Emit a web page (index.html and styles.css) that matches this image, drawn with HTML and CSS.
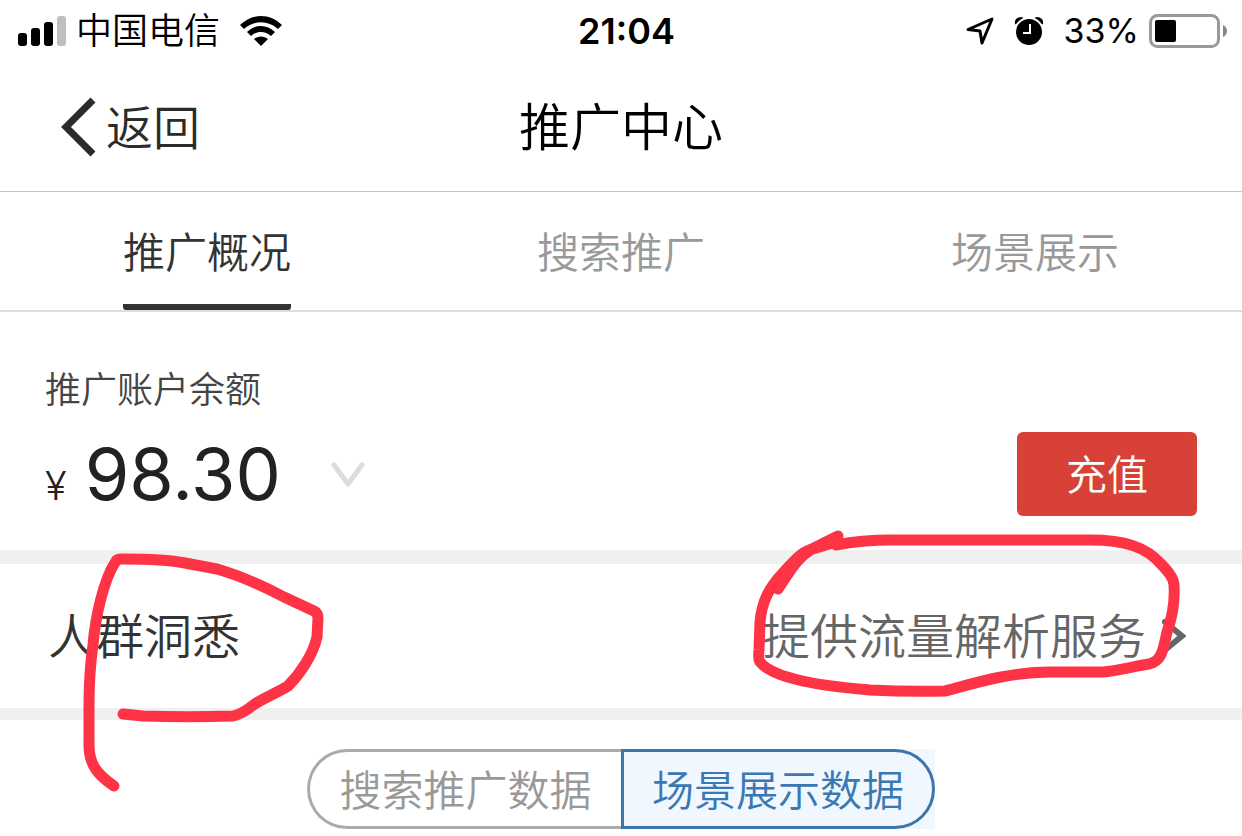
FILE: index.html
```html
<!DOCTYPE html>
<html lang="zh-CN">
<head>
    <meta charset="UTF-8">
    <meta name="viewport" content="width=device-width, initial-scale=1.0">
    <title>推广中心</title>
    <link rel="stylesheet" href="styles.css">
</head>
<body>
    <div class="status-bar">
        <div class="status-left">
            <svg class="signal" width="48" height="30" viewBox="0 0 48 30">
                <rect x="0" y="17" width="9" height="13" rx="3"/>
                <rect x="13" y="12" width="9" height="18" rx="3"/>
                <rect x="26" y="6" width="9" height="24" rx="3"/>
                <rect x="39" y="0" width="9" height="30" rx="3" fill="#bfbfbf"/>
            </svg>
            <span class="carrier">中国电信</span>
            <svg class="wifi" width="42" height="30" viewBox="0 0 42 30">
                <path d="M0 9C12-3 30-3 42 9L38 13C28 4 14 4 4 13Z"/>
                <path d="M7 16C15 8 27 8 35 16L31 20C25 14.500 17 14.500 11 20Z"/>
                <path d="M14 23C18 19.500 24 19.500 28 23L21 30Z"/>
            </svg>
        </div>
        <span class="clock">21:04</span>
        <div class="status-right">
            <svg width="28" height="28" viewBox="0 0 28 28">
                <path d="M26 2L16 26L14 14L2 12.500Z" fill="none" stroke="#000" stroke-width="3" stroke-linejoin="round"/>
            </svg>
            <svg class="alarm" width="30" height="30" viewBox="0 0 30 30">
                <path d="M1 8Q0 1 8 1L10 3L3 9ZM29 8Q30 1 22 1L20 3L27 9Z"/>
                <circle cx="15" cy="16" r="14" stroke="#fff" stroke-width="2"/>
                <path d="M16 8V17H9" fill="none" stroke="#fff" stroke-width="2"/>
            </svg>
            <span class="percent">33%</span>
            <svg class="battery" width="78" height="34" viewBox="0 0 78 34">
                <rect x="1.500" y="1.500" width="68" height="31" rx="7" fill="none" stroke="#999" stroke-width="3"/>
                <rect x="6" y="6" width="21" height="22" rx="2"/>
                <path d="M74 11Q78 13 78 17Q78 21 74 23Z" fill="#888"/>
            </svg>
        </div>
    </div>

    <header class="nav">
        <a class="back" href="#">
            <svg width="36" height="60" viewBox="0 0 36 60">
                <path d="M33 3L6 30L33 57" fill="none" stroke="#2b2b2b" stroke-width="7"/>
            </svg>
            <span>返回</span>
        </a>
        <h1>推广中心</h1>
    </header>

    <nav class="tabs">
        <a class="tab active" href="#">推广概况</a>
        <a class="tab" href="#">搜索推广</a>
        <a class="tab" href="#">场景展示</a>
    </nav>

    <main>
        <section class="account">
            <div class="balance">
                <div class="balance-label">推广账户余额</div>
                <div class="amount">
                    <span class="currency">¥</span>
                    <span class="number">98.30</span>
                    <button class="expand" type="button" aria-label="展开">
                        <svg width="34" height="26" viewBox="0 0 34 26">
                            <path d="M3 3L17 22L31 3" fill="none" stroke="#dcdcdc" stroke-width="5" stroke-linecap="round" stroke-linejoin="round"/>
                        </svg>
                    </button>
                </div>
            </div>
            <button class="recharge" type="button">充值</button>
        </section>

        <a class="insight" href="#">
            <span class="insight-title">人群洞悉</span>
            <span class="insight-desc">提供流量解析服务</span>
            <svg width="24" height="36" viewBox="0 0 24 36">
                <path d="M3 4L20 18L3 32" fill="none" stroke="#666" stroke-width="6" stroke-linecap="round"/>
            </svg>
        </a>

        <div class="segments">
            <button class="segment" type="button">搜索推广数据</button>
            <div class="segment-on"><button class="segment active" type="button">场景展示数据</button></div>
        </div>
    </main>

    <!-- 手绘标记 -->
    <svg class="marks" viewBox="0 0 1242 836">
        <path d="M114 786C98 775 89 765 89 745L89 707C89 685 90 665 93 645C95 620 103 580 116 561Q117 559 122 559C145 559 170 560 185 563L217 569C245 577 265 587 284 597L314 611Q318 613 318 618L317 637C313 655 300 674 288 686C275 694 261 699 252 706Q242 714 233 716C205 717 170 717 143 716L123 714"/>
        <path d="M838 536L812 549C795 559 788 575 778 589M836 545Q862 540 890 540L1090 540C1125 540 1146 547 1161 564Q1174 577 1174 585C1175 600 1173 615 1167 632C1163 650 1162 661 1149 664C1130 667 1118 671 1103 672L1050 672C1010 672 975 683 945 691Q910 692 870 690C805 685 770 675 760 662Q758 659 759 650L760 622C762 600 770 587 782 574C794 561 801 551 816 548L836 542"/>
    </svg>
</body>
</html>
```
FILE: styles.css
```css
* {
    box-sizing: border-box;
}

body {
    margin: 0;
    position: relative;
    background-color: #fff;
    color: #333;
    font-family: 'Inter', 'Noto Sans CJK SC', sans-serif;
    font-weight: 350;
    overflow-x: hidden;
}

a {
    color: inherit;
    text-decoration: none;
}

button {
    font: inherit;
    cursor: pointer;
}

svg {
    display: block;
    flex-shrink: 0;
}

.status-bar {
    display: grid;
    grid-template-columns: 1fr auto 1fr;
    align-items: center;
    height: 62px;
    padding: 0 15px 0 18px;
    color: #000;
    font-size: 36px;
    line-height: 62px;
}

.status-left,
.status-right {
    display: flex;
    align-items: center;
}

.status-right {
    justify-content: flex-end;
}

.carrier {
    margin: 0 20px 0 10px;
}

.clock {
    margin-left: 8px;
    font-weight: 600;
}

.alarm {
    margin: 0 20px;
}

.percent {
    margin-right: 10px;
    font-size: 34px;
    font-weight: 400;
}

.nav {
    display: grid;
    grid-template-columns: 1fr auto 1fr;
    align-items: center;
    height: 130px;
    padding: 0 60px;
    border-bottom: 1px solid #c4c4c4;
}

.back {
    display: flex;
    align-items: center;
    gap: 10px;
    color: #2b2b2b;
    font-size: 47px;
}

.back span {
    padding-bottom: 4px;
}

.nav h1 {
    margin: 0;
    padding-bottom: 6px;
    color: #000;
    font-size: 51px;
    font-weight: 350;
}

.tabs {
    display: grid;
    grid-template-columns: repeat(3, 1fr);
    justify-items: center;
    height: 120px;
    border-bottom: 2px solid #dedede;
}

.tab {
    height: 118px;
    color: #999;
    font-size: 42px;
    line-height: 122px;
}

.tab.active {
    color: #333;
    background: linear-gradient(#333, #333) bottom / 100% 6px no-repeat;
    border-radius: 3px;
}

.account {
    display: flex;
    align-items: flex-end;
    justify-content: space-between;
    height: 238px;
    padding: 0 45px 34px;
}

.balance {
    padding-bottom: 12px;
}

.balance-label {
    margin-bottom: 30px;
    color: #444;
    font-size: 36px;
    line-height: 48px;
}

.amount {
    display: flex;
    align-items: baseline;
    gap: 18px;
    color: #222;
    height: 60px;
    line-height: 60px;
}

.currency {
    font-size: 40px;
}

.number {
    font-size: 72px;
    font-weight: 400;
}

.expand {
    align-self: flex-start;
    margin: 18px 0 0 32px;
    padding: 0;
    border: 0;
    background: none;
}

.recharge {
    width: 180px;
    height: 84px;
    padding: 0 0 4px;
    border: 0;
    border-radius: 6px;
    background-color: #d84137;
    color: #fff;
    font-size: 41px;
}

.insight {
    display: flex;
    align-items: center;
    height: 170px;
    padding: 0 56px 0 48px;
    border-top: 14px solid #f0f0f1;
    border-bottom: 12px solid #f0f0f1;
    font-size: 48px;
}

.insight-title,
.insight-desc {
    padding-bottom: 6px;
}

.insight-title {
    flex-grow: 1;
}

.insight-desc {
    margin-right: 16px;
    color: #666;
}

.segments {
    display: flex;
    justify-content: center;
    padding: 29px 0 7px;
}

.segment {
    width: 314px;
    height: 80px;
    padding: 0 0 4px;
    border: 3px solid #aaa;
    border-right: 0;
    border-radius: 40px 0 0 40px;
    background: none;
    color: #999;
    font-size: 42px;
}

.segment-on {
    background-color: #f0f7fe;
}

.segment.active {
    border: 3px solid #3c76a9;
    border-radius: 0 40px 40px 0;
    color: #3a78b4;
}

.marks {
    position: absolute;
    top: 0;
    left: 0;
    width: 100%;
    fill: none;
    stroke: #fe3345;
    stroke-width: 11;
    stroke-linecap: round;
    stroke-linejoin: round;
    pointer-events: none;
}
```
